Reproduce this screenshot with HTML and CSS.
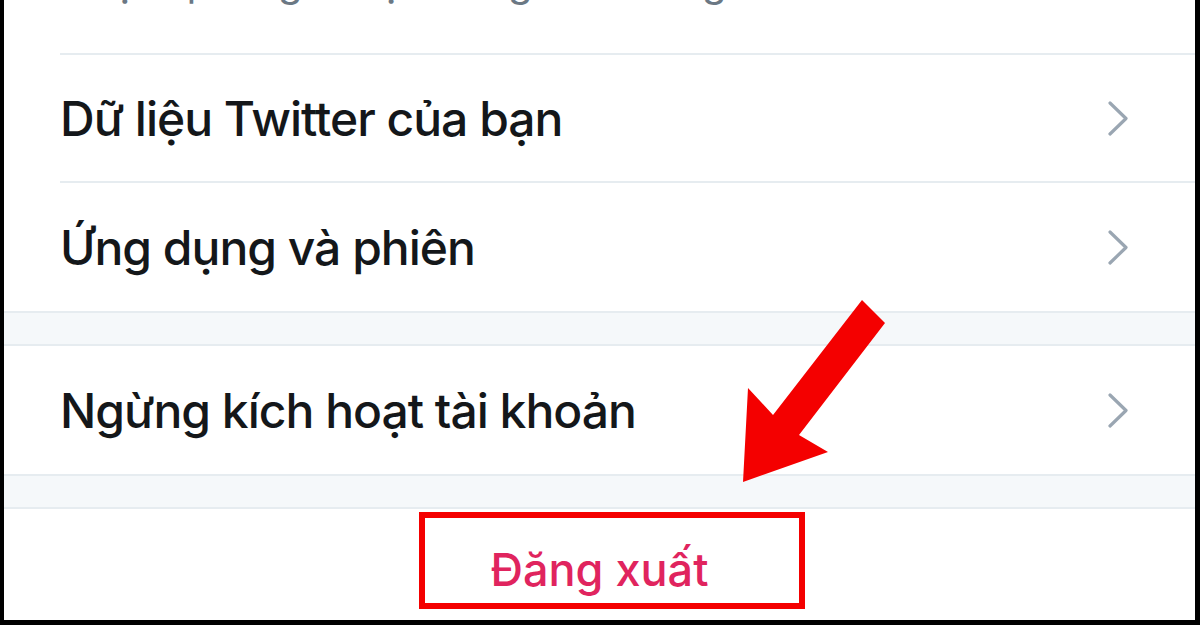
FILE: index.html
```html
<!DOCTYPE html>
<html lang="vi">

<head>
    <meta charset="utf-8">
    <title>Tài khoản</title>
    <link rel="stylesheet" href="styles.css">
</head>

<body>
    <div class="screen">
        <div class="desc-wrap">
            <p class="desc">Chọn quốc gia hiện đang sinh sống. Tìm hiểu thêm</p>
        </div>

        <div class="row">
            <div class="row-inner line">
                <span class="row-title">Dữ liệu Twitter của bạn</span>
                <svg class="chevron" width="20" height="35" viewBox="0 0 20 35">
                    <polyline points="2,2 18,17.5 2,33" />
                </svg>
            </div>
        </div>
        <div class="row">
            <div class="row-inner">
                <span class="row-title">Ứng dụng và phiên</span>
                <svg class="chevron" width="20" height="35" viewBox="0 0 20 35">
                    <polyline points="2,2 18,17.5 2,33" />
                </svg>
            </div>
        </div>

        <div class="band"></div>

        <div class="row">
            <div class="row-inner">
                <span class="row-title">Ngừng kích hoạt tài khoản</span>
                <svg class="chevron" width="20" height="35" viewBox="0 0 20 35">
                    <polyline points="2,2 18,17.5 2,33" />
                </svg>
            </div>
        </div>

        <div class="band"></div>

        <div class="logout">
            <span>Đăng xuất</span>
        </div>

        <!-- annotations drawn over the screenshot -->
        <div class="mark-box"></div>
        <svg class="mark-arrow" width="1191" height="620" viewBox="0 0 1191 620">
            <polygon points="858,300 881,323 795,435 824,452 739,482 744,388 769,415" />
        </svg>
    </div>
</body>

</html>
```

FILE: styles.css
```css
html,
body {
    margin: 0;
    padding: 0;
    background: #000;
    font-family: Inter, "Noto Sans", sans-serif;
}

.screen {
    position: relative;
    width: 1200px;
    height: 625px;
    box-sizing: border-box;
    border-left: 4px solid #000;
    border-right: 5px solid #000;
    border-bottom: 5px solid #000;
    background: #fff;
    overflow: hidden;
}

.desc-wrap {
    display: flow-root;
    margin-left: 56px;
    height: 53px;
    border-bottom: 2px solid #e6ecf0;
}

.desc {
    margin: 0;
    margin-top: -38px;
    font-size: 40px;
    line-height: 40px;
    color: #6b7884;
    white-space: nowrap;
}

.row {
    padding-left: 56px;
}

.row-inner {
    display: flex;
    align-items: center;
    justify-content: space-between;
    height: 128px;
    padding-right: 67px;
    box-sizing: border-box;
}

.line {
    border-bottom: 2px solid #e6ecf0;
}

.row-title {
    font-size: 48px;
    font-weight: 500;
    letter-spacing: -1px;
    color: #14171a;
}

.chevron polyline {
    fill: none;
    stroke: #9aa6b2;
    stroke-width: 3.2;
    stroke-linecap: round;
    stroke-linejoin: round;
}

.band {
    height: 31px;
    background: #f5f8fa;
    border-top: 2px solid #e6ecf0;
    border-bottom: 2px solid #e6ecf0;
}

.logout {
    display: flex;
    justify-content: center;
    align-items: center;
    height: 112px;
    padding-top: 8px;
    box-sizing: border-box;
    font-size: 45px;
    font-weight: 500;
    color: #e0245e;
}

.mark-box {
    position: absolute;
    left: 415px;
    top: 512px;
    width: 386px;
    height: 97px;
    box-sizing: border-box;
    border: 6px solid #f40000;
}

.mark-arrow {
    position: absolute;
    left: 0;
    top: 0;
}

.mark-arrow polygon {
    fill: #f40000;
}
```
